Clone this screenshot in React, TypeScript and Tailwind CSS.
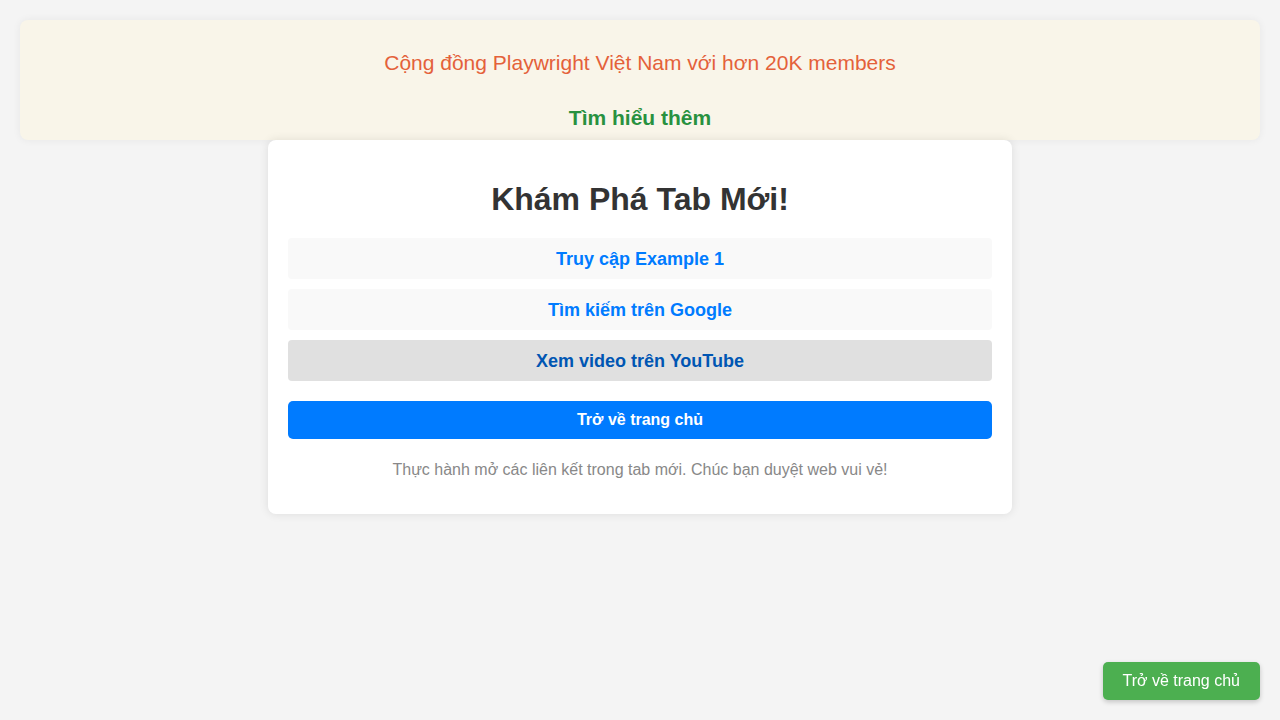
const links = [
  { label: 'Truy cập Example 1', active: false },
  { label: 'Tìm kiếm trên Google', active: false },
  { label: 'Xem video trên YouTube', active: true },
]

export default function App() {
  return (
    <div className="min-h-screen bg-[#f4f4f4] p-5 font-['Liberation_Sans',Arial,sans-serif]">
      <div className="flex h-[120px] flex-col items-center rounded-lg bg-[#f9f5e9] pt-[31px] shadow-[0_0_8px_rgba(0,0,0,0.06)]">
        <p className="text-[21px] leading-[23px] text-[#e4613a]">Cộng đồng Playwright Việt Nam với hơn 20K members</p>
        <a className="mt-[32px] text-[21px] font-bold leading-[23px] text-[#28913f]">Tìm hiểu thêm</a>
      </div>

      <div className="mx-auto flex w-[744px] flex-col rounded-lg bg-white p-5 text-center shadow-[0_0_10px_rgba(0,0,0,0.1)]">
        <h1 className="mt-[21px] text-[32px] font-bold leading-[37px] text-[#333]">Khám Phá Tab Mới!</h1>
        <div className="mt-[20px] flex flex-col gap-[10px]">
          {links.map((l) => (
            <a
              key={l.label}
              className={`block rounded-[4px] pt-[11px] pb-[9px] text-[18px] font-bold leading-[21px] ${l.active ? 'bg-[#e0e0e0] text-[#0056b3]' : 'bg-[#f9f9f9] text-[#007bff]'}`}
            >
              {l.label}
            </a>
          ))}
        </div>
        <button className="mt-[20px] rounded-[5px] bg-[#007bff] py-[10px] text-[16px] font-bold leading-[18px] text-white">
          Trở về trang chủ
        </button>
        <p className="mt-[22px] mb-[15px] text-[16px] leading-[18px] text-[#888]">
          Thực hành mở các liên kết trong tab mới. Chúc bạn duyệt web vui vẻ!
        </p>
      </div>

      <button className="fixed right-5 bottom-5 rounded-[5px] bg-[#4caf50] px-5 py-[10px] text-[16px] leading-[18px] text-white shadow-[0_2px_5px_rgba(0,0,0,0.2)]">
        Trở về trang chủ
      </button>
    </div>
  )
}
